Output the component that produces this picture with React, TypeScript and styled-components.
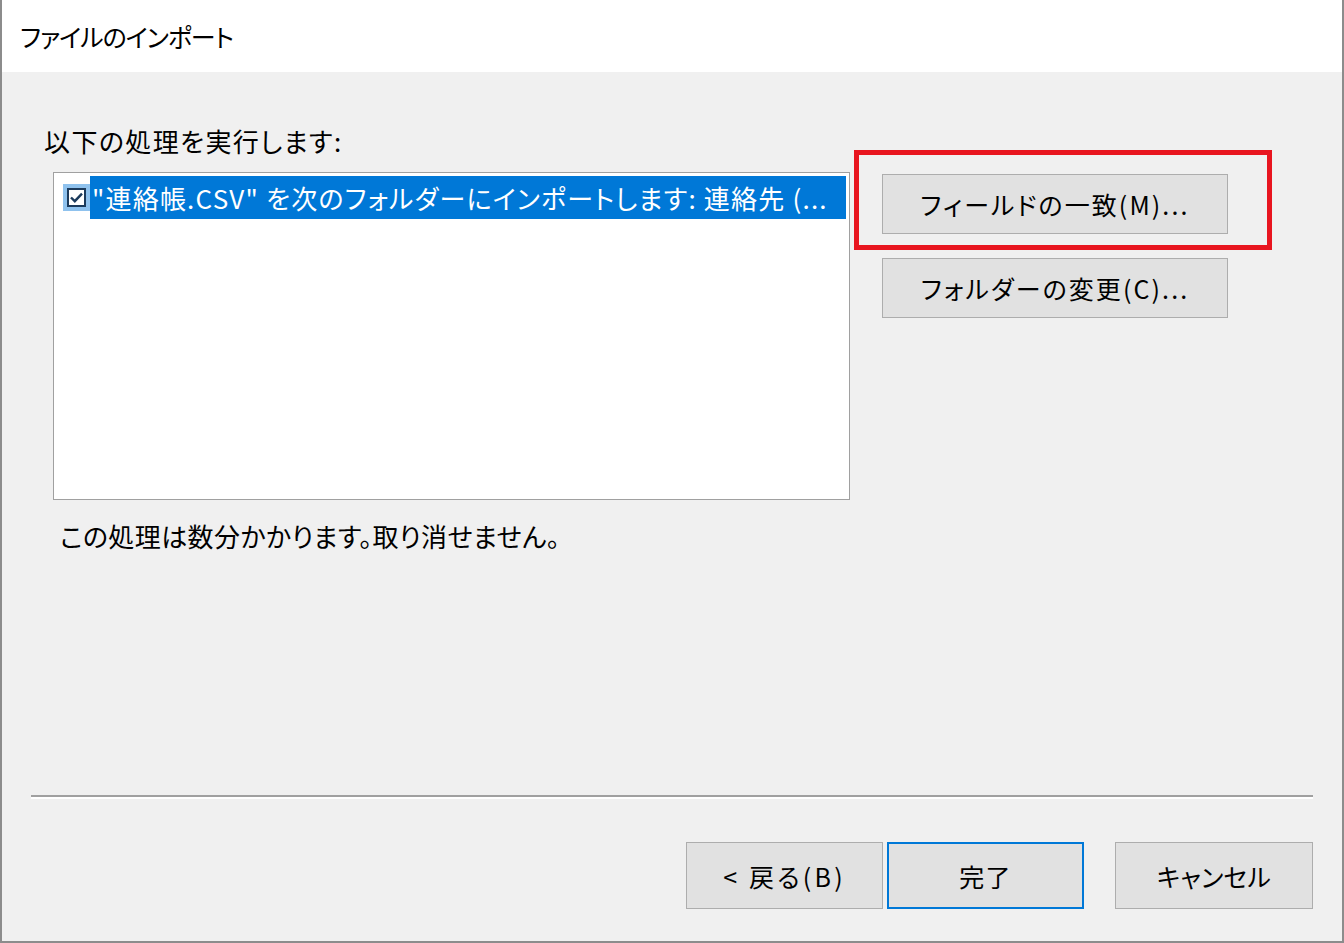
import React from "react";
import styled, { createGlobalStyle } from "styled-components";

const GlobalStyle = createGlobalStyle`
  html, body {
    margin: 0;
    padding: 0;
    background: #ffffff;
  }
  body {
    font-family: "Noto Sans CJK JP", "Noto Sans", sans-serif;
    color: #000000;
  }
`;

const Window = styled.div`
  width: 1344px;
  height: 943px;
  box-sizing: border-box;
  border-left: 2px solid #8c8c8c;
  border-right: 2px solid #8c8c8c;
  border-bottom: 2px solid #8c8c8c;
  display: flex;
  flex-direction: column;
  overflow: hidden;
`;

const TitleBar = styled.div`
  height: 72px;
  flex: none;
  background: #ffffff;
  display: flex;
  align-items: center;
  padding-left: 18px;
  font-size: 25px;
  font-feature-settings: "palt";
  letter-spacing: -1px;
`;

const Body = styled.div`
  flex: 1;
  background: #f0f0f0;
  display: flex;
  flex-direction: column;
  padding-top: 54px;
`;

const Label = styled.div`
  margin-left: 42px;
  font-size: 26px;
  line-height: 30px;
  font-feature-settings: "palt";
  letter-spacing: 1.4px;
`;

const MainRow = styled.div`
  display: flex;
  margin-top: 16px;
  margin-left: 51px;
  gap: 32px;
`;

const ListBox = styled.div`
  width: 797px;
  height: 328px;
  box-sizing: border-box;
  border: 1px solid #a0a0a0;
  background: #ffffff;
  padding: 3px 3px 0 9px;
`;

const ListRow = styled.div`
  display: flex;
  align-items: center;
  height: 43px;
`;

const CheckWrap = styled.div`
  width: 27px;
  height: 27px;
  background: #8fc2ee;
  display: flex;
  align-items: center;
  justify-content: center;
  flex: none;
`;

const Highlight = styled.div`
  flex: 1;
  height: 43px;
  background: #0078d7;
  color: #ffffff;
  display: flex;
  align-items: center;
  padding-left: 2px;
  font-size: 26px;
  font-feature-settings: "palt";
  letter-spacing: 1.2px;
  white-space: nowrap;
  overflow: hidden;
`;

const SideButtons = styled.div`
  position: relative;
  display: flex;
  flex-direction: column;
  gap: 24px;
  padding-top: 2px;
`;

const Marker = styled.div`
  position: absolute;
  left: -28px;
  top: -22px;
  width: 418px;
  height: 100px;
  box-sizing: border-box;
  border: 5px solid #e8151f;
  pointer-events: none;
`;

const Button = styled.div<{ $w: number; $h: number; $ls?: number; $default?: boolean }>`
  width: ${(p) => p.$w}px;
  height: ${(p) => p.$h}px;
  box-sizing: border-box;
  background: #e1e1e1;
  border: ${(p) => (p.$default ? "2px solid #0078d7" : "1px solid #adadad")};
  display: flex;
  align-items: center;
  justify-content: center;
  font-size: 25px;
  font-feature-settings: "palt";
  letter-spacing: ${(p) => p.$ls ?? 0.6}px;
  white-space: nowrap;
`;

const Note = styled.div`
  margin-left: 58px;
  margin-top: 21px;
  font-size: 26px;
  line-height: 30px;
  font-feature-settings: "palt";
  letter-spacing: 0.4px;
`;

const Separator = styled.div`
  margin: 244px 29px 0 29px;
  height: 2px;
  background: #a0a0a0;
  border-bottom: 2px solid #ffffff;
`;

const Footer = styled.div`
  display: flex;
  justify-content: flex-end;
  margin-top: 43px;
  margin-right: 29px;
`;

const Gap = styled.div<{ $w: number }>`
  width: ${(p) => p.$w}px;
`;

function CheckIcon() {
  return (
    <svg width="19" height="19" viewBox="0 0 19 19">
      <rect x="1" y="1" width="17" height="17" fill="#ffffff" stroke="#1b3a5c" strokeWidth="2" />
      <path d="M4 9.5 L7.8 13.2 L15 5.6" fill="none" stroke="#1b3a5c" strokeWidth="2.4" />
    </svg>
  );
}

export default function App() {
  return (
    <>
      <GlobalStyle />
      <Window>
        <TitleBar>ファイルのインポート</TitleBar>
        <Body>
          <Label>以下の処理を実行します:</Label>
          <MainRow>
            <ListBox>
              <ListRow>
                <CheckWrap>
                  <CheckIcon />
                </CheckWrap>
                <Highlight>"連絡帳.CSV" を次のフォルダーにインポートします: 連絡先 (...</Highlight>
              </ListRow>
            </ListBox>
            <SideButtons>
              <Marker />
              <Button $w={346} $h={60} $ls={2.1}>フィールドの一致(M)...</Button>
              <Button $w={346} $h={60} $ls={2.1}>フォルダーの変更(C)...</Button>
            </SideButtons>
          </MainRow>
          <Note>この処理は数分かかります。取り消せません。</Note>
          <Separator />
          <Footer>
            <Button $w={197} $h={67} $ls={3.2}>&lt; 戻る(B)</Button>
            <Gap $w={4} />
            <Button $w={197} $h={67} $ls={1.2} $default>完了</Button>
            <Gap $w={31} />
            <Button $w={198} $h={67} $ls={0.2}>キャンセル</Button>
          </Footer>
        </Body>
      </Window>
    </>
  );
}
